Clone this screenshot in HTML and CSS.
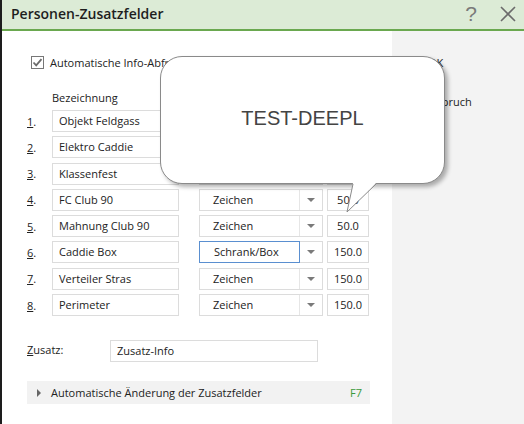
FILE: index.html
```html
<!DOCTYPE html>
<html lang="de">
<head>
  <meta charset="UTF-8">
  <title>Personen-Zusatzfelder</title>
  <link rel="stylesheet" href="styles.css">
</head>
<body>

  <div class="window">
    <div class="titlebar">
      <span class="title">Personen-Zusatzfelder</span>
      <span class="help">?</span>
      <svg class="close" width="16" height="16" viewBox="0 0 16 16">
        <path d="M1 1 L15 15 M15 1 L1 15" stroke="#6b6b6b" stroke-width="1.6" fill="none"/>
      </svg>
    </div>

    <div class="content">
      <div class="main">
        <label class="check">
          <span class="box">
            <svg width="11" height="11" viewBox="0 0 11 11">
              <path d="M1.5 5.5 L4.2 8.3 L9.5 2.2" stroke="#6b6b6b" stroke-width="1.8" fill="none"/>
            </svg>
          </span>
          Automatische Info-Abfrage
        </label>

        <div class="head">Bezeichnung</div>

        <div class="rows">
          <div class="row">
            <span class="num"><u>1</u>.</span>
            <div class="field name">Objekt Feldgass</div>
            <div class="select"><span class="val">Zeichen</span><span class="arrow"></span></div>
            <div class="field len">50.0</div>
          </div>
          <div class="row">
            <span class="num"><u>2</u>.</span>
            <div class="field name">Elektro Caddie</div>
            <div class="select"><span class="val">Zeichen</span><span class="arrow"></span></div>
            <div class="field len">50.0</div>
          </div>
          <div class="row">
            <span class="num"><u>3</u>.</span>
            <div class="field name">Klassenfest</div>
            <div class="select"><span class="val">Zeichen</span><span class="arrow"></span></div>
            <div class="field len">50.0</div>
          </div>
          <div class="row">
            <span class="num"><u>4</u>.</span>
            <div class="field name">FC Club 90</div>
            <div class="select"><span class="val">Zeichen</span><span class="arrow"></span></div>
            <div class="field len">50.0</div>
          </div>
          <div class="row">
            <span class="num"><u>5</u>.</span>
            <div class="field name">Mahnung Club 90</div>
            <div class="select"><span class="val">Zeichen</span><span class="arrow"></span></div>
            <div class="field len">50.0</div>
          </div>
          <div class="row">
            <span class="num"><u>6</u>.</span>
            <div class="field name">Caddie Box</div>
            <div class="select focus"><span class="val">Schrank/Box</span><span class="arrow"></span></div>
            <div class="field len">150.0</div>
          </div>
          <div class="row">
            <span class="num"><u>7</u>.</span>
            <div class="field name">Verteiler Stras</div>
            <div class="select"><span class="val">Zeichen</span><span class="arrow"></span></div>
            <div class="field len">150.0</div>
          </div>
          <div class="row">
            <span class="num"><u>8</u>.</span>
            <div class="field name">Perimeter</div>
            <div class="select"><span class="val">Zeichen</span><span class="arrow"></span></div>
            <div class="field len">150.0</div>
          </div>
        </div>

        <div class="extra">
          <span class="extra-label"><u>Z</u>usatz:</span>
          <div class="field extra-input">Zusatz-Info</div>
        </div>

        <div class="expander">
          <span class="caret"></span>
          <span class="expander-text">Automatische Änderung der Zusatzfelder</span>
          <span class="key">F7</span>
        </div>
      </div>

      <div class="side">
        <button class="btn">OK</button>
        <button class="btn">Abbruch</button>
      </div>
    </div>

    <!-- speech bubble tooltip -->
    <div class="bubble">
      TEST-DEEPL
      <svg class="tail" width="34" height="32" viewBox="0 0 34 32">
        <polygon points="7,0 1,29 30,0" fill="#fff"/>
        <polyline points="7,1 1,29 30,1" fill="none" stroke="#8a8a8a" stroke-width="1"/>
      </svg>
    </div>
  </div>

</body>
</html>
```

FILE: styles.css
```css
html {
  box-sizing: border-box;
}

*, *:before, *:after {
  box-sizing: inherit;
}

body {
  margin: 0;
  padding: 0;
  font-family: 'Open Sans', 'Liberation Sans', sans-serif;
  font-size: 11px;
  color: #222;
  background: #fff;
}

.window {
  position: relative;
  width: 524px;
  height: 424px;
  display: flex;
  flex-direction: column;
  border-left: 2px solid #1d1d1d;
  overflow: hidden;
}

.titlebar {
  height: 31px;
  flex: none;
  display: flex;
  align-items: center;
  padding-left: 9px;
  background: #dcebd6;
  border-bottom: 2px solid #6aa84f;
}

.title {
  font-size: 14px;
  font-weight: 600;
  color: #1e1e1e;
  flex: 1;
  margin-top: -2px;
}

.help {
  font-family: 'Liberation Sans', sans-serif;
  font-size: 21px;
  color: #7a7a7a;
  margin-right: 23px;
  margin-top: -2px;
}

.close {
  margin-right: 8px;
  margin-top: -2px;
}

.content {
  flex: 1;
  display: flex;
}

.main {
  width: 390px;
  padding: 22px 0 0 25px;
}

.side {
  flex: 1;
  background: #f3f3f3;
  display: flex;
  flex-direction: column;
  align-items: flex-start;
  padding: 20px 0 0 34px;
}

.btn {
  font-family: inherit;
  font-size: 11px;
  color: #222;
  background: none;
  border: none;
  padding: 0 2px;
  height: 22px;
  margin-bottom: 17px;
}

.check {
  display: flex;
  align-items: center;
  margin-left: 4px;
  height: 18px;
}

.box {
  width: 13px;
  height: 13px;
  border: 1px solid #777;
  display: flex;
  align-items: center;
  justify-content: center;
  margin-right: 6px;
}

.head {
  margin: 18px 0 0 25px;
  height: 18px;
  line-height: 18px;
}

.rows {
  margin-top: 3px;
  display: flex;
  flex-direction: column;
  gap: 4.3px;
}

.row {
  display: flex;
  align-items: center;
  height: 22px;
}

.num {
  width: 25px;
}

.field {
  height: 22px;
  line-height: 20px;
  border: 1px solid #dcdcdc;
  padding-left: 6px;
  background: #fff;
  white-space: nowrap;
  overflow: hidden;
}

.name {
  width: 127px;
}

.select {
  width: 124px;
  height: 22px;
  margin-left: 20px;
  display: flex;
  border: 1px solid #dcdcdc;
}

.select .val {
  flex: 1;
  line-height: 20px;
  padding-left: 13px;
  border-right: 1px solid #e6e6e6;
}

.select.focus .val {
  border: 1px solid #5a8fd0;
  margin: -1px 0 -1px -1px;
  line-height: 20px;
  padding-left: 14px;
}

.arrow {
  width: 22px;
  display: flex;
  align-items: center;
  justify-content: center;
}

.arrow:after {
  content: '';
  border-left: 4px solid transparent;
  border-right: 4px solid transparent;
  border-top: 4px solid #7a7a7a;
}

.len {
  width: 42px;
  margin-left: 4px;
  padding-left: 0;
  text-align: center;
}

.extra {
  display: flex;
  align-items: center;
  margin-top: 24px;
}

.extra-label {
  width: 83px;
  margin-top: -4px;
}

.extra-input {
  width: 208px;
  padding-left: 6px;
}

.expander {
  width: 343px;
  height: 23px;
  margin-top: 19px;
  background: #f2f2f2;
  display: flex;
  align-items: center;
  padding: 0 8px 0 10px;
}

.caret {
  border-top: 4px solid transparent;
  border-bottom: 4px solid transparent;
  border-left: 4px solid #666;
  margin-right: 10px;
}

.expander-text {
  flex: 1;
}

.key {
  color: #3b9a3b;
}

.bubble {
  position: absolute;
  left: 158px;
  top: 56px;
  width: 285px;
  height: 128px;
  background: #fff;
  border: 1px solid #8a8a8a;
  border-radius: 22px;
  box-shadow: 3px 3px 4px rgba(0,0,0,0.3);
  display: flex;
  align-items: center;
  justify-content: center;
  font-family: 'Liberation Sans', sans-serif;
  font-size: 20px;
  color: #444;
  padding-bottom: 3px;
}

.tail {
  position: absolute;
  left: 185px;
  top: 126px;
}
```
